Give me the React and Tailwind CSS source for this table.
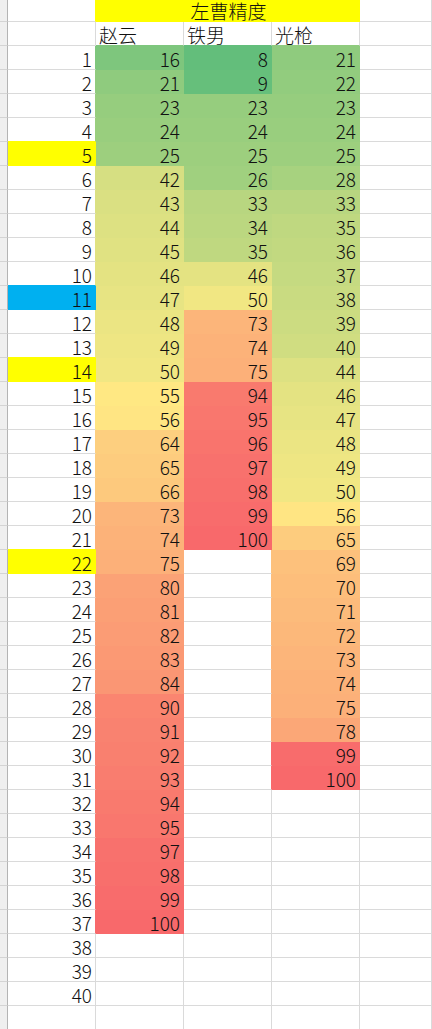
import React from "react";

const ZY = [16,21,23,24,25,42,43,44,45,46,47,48,49,50,55,56,64,65,66,73,74,75,80,81,82,83,84,90,91,92,93,94,95,97,98,99,100];
const TN = [8,9,23,24,25,26,33,34,35,46,50,73,74,75,94,95,96,97,98,99,100];
const GQ = [21,22,23,24,25,28,33,35,36,37,38,39,40,44,46,47,48,49,50,56,65,69,70,71,72,73,74,75,78,99,100];
const COLS = [ZY, TN, GQ];

const GRID = "#dadada";
const MIN = 8, MAX = 100, MID = 54;
const G = [99, 190, 123], Y = [255, 235, 132], R = [248, 105, 107];

function lerp(a, b, t) {
  return a.map((v, i) => Math.round(v + (b[i] - v) * t));
}
function scale(v) {
  const c = v <= MID ? lerp(G, Y, (v - MIN) / (MID - MIN)) : lerp(Y, R, (v - MID) / (MAX - MID));
  return `rgb(${c[0]},${c[1]},${c[2]})`;
}

const DATA_ROWS = 41;

// fill for data row k (1-based), column c (0=A..4=E)
function fill(k, c) {
  if (k < 1 || k > DATA_ROWS) return null;
  if (c === 0) {
    if (k === 5 || k === 14 || k === 22) return "#ffff00";
    if (k === 11) return "#00b0f0";
    return null;
  }
  if (c >= 1 && c <= 3) {
    const v = COLS[c - 1][k - 1];
    return v === undefined ? null : scale(v);
  }
  return null;
}
function value(k, c) {
  if (c === 0) return k <= 40 ? k : "";
  if (c >= 1 && c <= 3) {
    const v = COLS[c - 1][k - 1];
    return v === undefined ? "" : v;
  }
  return "";
}

function Cell({ w, bg, rb, bb, className = "", children }) {
  return (
    <div
      className={`box-border h-full border-r border-b flex items-end shrink-0 ${w} ${className}`}
      style={{ backgroundColor: bg || "#ffffff", borderRightColor: rb, borderBottomColor: bb }}
    >
      {children}
    </div>
  );
}

function Strip() {
  return <div className="box-border h-full w-[8px] shrink-0 bg-[#efefef] border-r border-r-[#b4b4b4] border-b border-b-[#d4d4d4]" />;
}

export default function App() {
  const widths = ["w-[88px]", "w-[88px]", "w-[88px]", "w-[88px]", "flex-1"];
  return (
    <div className="w-[432px] h-[1029px] overflow-hidden bg-white text-[#111111] font-['Noto_Sans_CJK_SC',sans-serif] font-light text-[19px] leading-[19px]">
      {/* title row */}
      <div className="flex h-[22px]">
        <Strip />
        <Cell w="w-[88px]" rb="#ffff00" bb={GRID} />
        <Cell w="w-[264px]" bg="#ffff00" rb="#ffff00" bb="#ffff00" className="justify-center items-center">
          <span className="pl-[2px] leading-[20px]">左曹精度</span>
        </Cell>
        <Cell w="flex-1" rb={GRID} bb={GRID} />
      </div>
      {/* header row */}
      <div className="flex h-[24px]">
        <Strip />
        {["", "赵云", "铁男", "光枪", ""].map((t, c) => (
          <Cell
            key={c}
            w={widths[c]}
            rb={GRID}
            bb={fill(1, c) || GRID}
            className="pl-[3px] pb-[1px]"
          >
            {t}
          </Cell>
        ))}
      </div>
      {Array.from({ length: DATA_ROWS }, (_, i) => i + 1).map((k) => (
        <div key={k} className="flex h-[24px]">
          <Strip />
          {[0, 1, 2, 3, 4].map((c) => {
            const f = fill(k, c);
            const rf = c < 4 ? fill(k, c + 1) : null;
            const df = fill(k + 1, c);
            return (
              <Cell
                key={c}
                w={widths[c]}
                bg={f}
                rb={f || rf || GRID}
                bb={f || df || GRID}
                className="justify-end pr-[3px] pb-[1px]"
              >
                {value(k, c)}
              </Cell>
            );
          })}
        </div>
      ))}
    </div>
  );
}
